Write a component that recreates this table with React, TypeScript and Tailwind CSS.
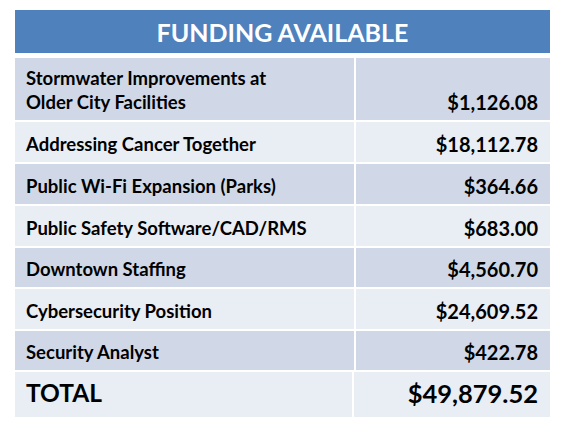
import React from "react";

const rows: { label: React.ReactNode; amount: string; h: string }[] = [
  { label: <>Stormwater Improvements at<br />Older City Facilities</>, amount: "$1,126.08", h: "h-[62px]" },
  { label: "Addressing Cancer Together", amount: "$18,112.78", h: "h-[40px]" },
  { label: "Public Wi-Fi Expansion (Parks)", amount: "$364.66", h: "h-[40px]" },
  { label: "Public Safety Software/CAD/RMS", amount: "$683.00", h: "h-[40px]" },
  { label: "Downtown Staffing", amount: "$4,560.70", h: "h-[39px]" },
  { label: "Cybersecurity Position", amount: "$24,609.52", h: "h-[40px]" },
  { label: "Security Analyst", amount: "$422.78", h: "h-[39px]" },
];

export default function App() {
  return (
    <div
      className="w-[581px] h-[446px] bg-white pt-[10px] pl-[15px]"
      style={{ fontFamily: "Lato, 'Open Sans', sans-serif" }}
    >
      <div className="w-[535px] flex flex-col">
        <div className="h-[43px] bg-[#4F81BD] flex items-end justify-center pb-[6px] text-white font-bold text-[25px] leading-[30px]">
          FUNDING AVAILABLE
        </div>
        <div className="h-[5px] bg-white" />
        <div className="flex flex-col gap-[2px]">
          {rows.map((r, i) => (
            <div key={i} className={`flex gap-[2px] ${r.h} ${i % 2 === 0 ? "bg-[#D0D8E8]" : "bg-[#E9EDF4]"}`}>
              <div className="w-[337px] flex items-end pl-[11px] pb-[6px] font-bold text-[18.5px] leading-[24px] text-black">
                <span>{r.label}</span>
              </div>
              <div className="w-[2px] bg-white" />
              <div className="flex-1 flex items-end justify-end pr-[12px] pb-[6px] font-bold text-[20px] leading-[24px] text-black">
                {r.amount}
              </div>
            </div>
          ))}
          <div className="flex h-[45px] bg-[#E9EDF4]">
            <div className="w-[337px] flex items-end pl-[11px] pb-[9px] font-bold text-[24.5px] leading-[30px] text-black">
              TOTAL
            </div>
            <div className="w-[2px] bg-white" />
            <div className="flex-1 flex items-end justify-end pr-[12px] pb-[9px] font-bold text-[25.5px] leading-[30px] text-black">
              $49,879.52
            </div>
          </div>
        </div>
      </div>
    </div>
  );
}
